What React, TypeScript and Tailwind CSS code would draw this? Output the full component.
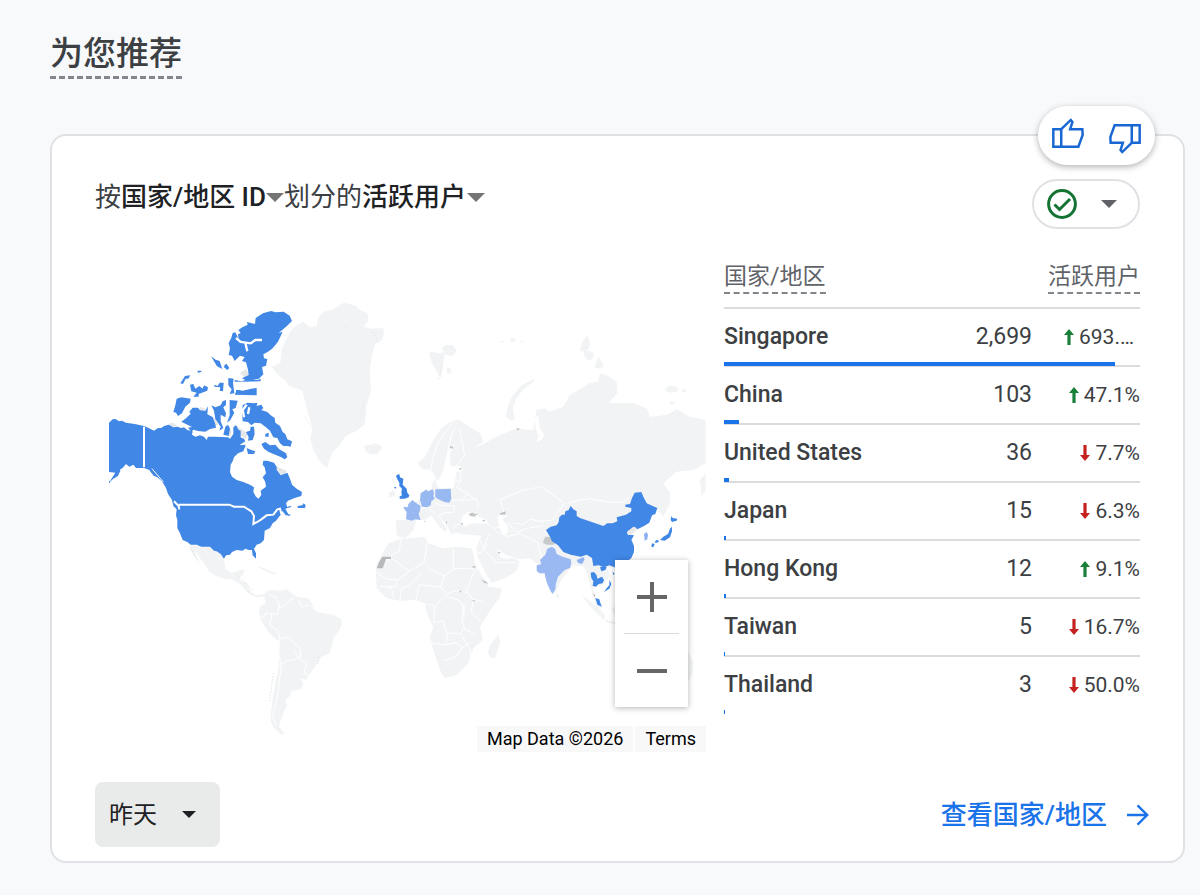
import { useState } from 'react';

type Row = { country: string; users: number; change: string; up: boolean };

const ROWS: Row[] = [
  { country: 'Singapore', users: 2699, change: '693.…', up: true },
  { country: 'China', users: 103, change: '47.1%', up: true },
  { country: 'United States', users: 36, change: '7.7%', up: false },
  { country: 'Japan', users: 15, change: '6.3%', up: false },
  { country: 'Hong Kong', users: 12, change: '9.1%', up: true },
  { country: 'Taiwan', users: 5, change: '16.7%', up: false },
  { country: 'Thailand', users: 3, change: '50.0%', up: false },
];

const TOTAL = ROWS.reduce((sum, r) => sum + r.users, 0);

function Caret({ className }: { className: string }) {
  return (
    <svg viewBox="0 0 16 8" className={className} aria-hidden="true">
      <path d="M0 0h16L8 8z" fill="currentColor" />
    </svg>
  );
}

function Thumb({ className = '' }: { className?: string }) {
  return (
    <svg viewBox="0 0 97 91" className={`h-[30px] w-8 ${className}`} fill="none" stroke="#1967d2" strokeWidth="7.5" aria-hidden="true">
      <path d="M4 34h24v53H4z" />
      <path d="M28 34 57 6l5 6-7 22h37l1 17-13 36H28" />
    </svg>
  );
}

function Trend({ up }: { up: boolean }) {
  return up ? (
    <svg viewBox="0 0 10 16" className="h-4 w-[10px]" fill="#188038" role="img" aria-label="up">
      <path d="M5 0l5 6H6.6v10H3.4V6H0z" />
    </svg>
  ) : (
    <svg viewBox="0 0 10 16" className="h-4 w-[10px]" fill="#c5221f" role="img" aria-label="down">
      <path d="M5 16l5-6H6.6V0H3.4v10H0z" />
    </svg>
  );
}

function WorldMap() {
  return (
    <svg viewBox="109 296 597 456" className="block w-full" role="img" aria-label="World map">
      {/* Greenland, Iceland, Svalbard */}
      <g transform="translate(240 290) scale(.33333)" fill="#f1f3f4">
        <path d="M95 230l26-12 4-40 25-53 18-18 22-12 20 17 20-4 4-24 20-20 22-4 34-22 35 8 14 14 24 10 2 22-14 18 20 6 38-2 4 16-8 20-20 12-8 30-8 48 4 60-14 50-4 52-22 18-38 20-18 28-20 18-8 22-8 26-18-14-22-38-10-36 6-28-16-62-14-54-40-14-12-18-24-18z" />
        <path d="M372 470l14-6 8 4 20-6 12 10-10 14-20 6-18-8z" />
        <path d="M567 190l12-6 12 6 24-4-4 26-8 52-14-22-14-24zM605 175l12-10 20 0 14 16-12 16-20-2zM620 232l10 2 4 14-12 4z" />
        <path d="M362 380l10-50M195 380l18 34M315 110l12 4M400 126l14 32M596 268l10-40" stroke="#d9dbdd" strokeWidth="2" strokeDasharray="4 6" fill="none" />
      </g>

      {/* Mexico, South America */}
      <g transform="translate(100 480) scale(.33333)">
        <g fill="#f1f3f4">
          <path d="M268 196L330 200 345 214 356 214 372 236 376 268 394 278 412 274 426 268 434 272 426 288 418 292 422 304 440 308 448 326 456 340 474 346 490 342 490 350 470 352 448 342 436 330 420 312 396 298 376 296 348 288 328 276 318 258 298 232 286 214 290 236 302 250 292 244 276 218z" />
          <path d="M490 345l12-12 13-3 26 2 19-4 18 14 12 8 35 5 10 14 6 20 22 10 37 5 24 14 2 14-8 18-18 26-4 22-7 22-27 12-10 18-20 28-14 22-16-6 8 20-6 12-30 8-4 14-12 8-2 14 6 4-10 20-6 18-8 20 0 10 16 18-10 4-20-18-12-22 0-20 6-44 8-50 10-46 0-40 2-38-30-26-26-40-6-22 6-20 16-10z" />
          <path d="M468 258l22 6 30 12 14 6-18 0-30-14z" />
        </g>
        <g fill="none" stroke="#fff" strokeWidth="3">
          <path d="M510 345l20 8 8 20-6 32-16-6-22 4M532 385l20-6 12-14 18-12M596 360l8 20 22-4M516 400l-6 36 24 16 6 24 24-4 36 32 2 26-18 10-20 2-24 12M538 476l-2 42 8 40-12 90-14 60 12 30M582 514l14 20 24 18-8 24 18 12M476 410l14 2 10-16" />
        </g>
        <path d="M272 206l22 34M410 285l50 46M656 532l-2 20M520 580l-12 88" stroke="#cfd1d3" strokeWidth="2" strokeDasharray="4 5" fill="none" />
      </g>

      {/* Canada and the United States */}
      <g transform="translate(100 290) scale(.33333)">
        <path d="M205 402l14-4 14 10-20 4zM420 250l18-14 8 14-8 16zM300 350l22 10-4 12-20-10zM340 384l10-4 4 24-8 4zM385 405l10 20-6 16-8-20zM402 402l40 28-4 16-20-10zM525 528l36 14-10 14-16-4z" fill="#e4e6e8" />
        <g fill="#4187e6">
          <path d="M27 398L38 388 46 387 58 394 66 392 78 398 104 402 132 408 146 414 162 422 174 414 184 414 192 408 206 404 220 412 232 410 244 414 252 412 262 420 278 424 276 434 286 440 300 436 312 440 320 450 324 440 340 440 384 442 390 446 400 432 408 426 416 440 432 446 436 454 420 464 424 470 436 468 430 484 414 490 402 502 398 514 392 524 390 546 396 560 410 570 430 576 450 584 462 592 460 606 468 620 476 626 484 614 482 602 498 590 496 576 488 562 498 550 494 532 488 524 490 512 502 512 522 518 530 530 530 540 542 556 562 548 570 566 576 584 590 596 606 606 604 618 584 624 564 632 558 640 562 652 568 648 576 650 556 656 566 674 558 676 546 662 542 674 528 692 518 700 510 714 494 722 492 750 482 760 470 764 462 776 468 790 468 806 458 796 456 780 446 780 436 776 428 782 410 780 396 786 390 794 378 796 372 806 362 792 350 784 342 782 330 770 304 770 290 764 272 764 262 756 248 750 240 730 232 714 232 690 228 676 230 658 220 648 216 630 204 612 198 594 186 574 172 562 158 556 148 540 132 534 108 534 100 524 88 530 78 522 70 532 62 540 54 558 40 566 27 578 46 548 27 546z" />
          <path d="M415 120l12-8 16-8-2-8 24 6 2-18 22-14 24-7 14 4 24-2 18 12 7 16-16 16-24 20 12-4-14 30-16 20-14 10-14 8 2 12 10 2-4 20-12 4 4 22-14 14-16 2-18 4-16-8 20-10-2-16-6-22-12-4 8-12-14-4-16 16-8-16-10-2 4-20-4-16 8-16 4-14 8-2 10 20-2-14 8-4z" />
          <path d="M408 300l8 0 12 2 26-6 16-2 0 22-66-2 4-8zM404 270l20 4 20-6 30 2 8-4 0 8-78 1z" />
          <path d="M428 346l14-8 22 2 8-2-2 10 14-4 6 10-6 6 18 6 10 10 12 8 2 14 14 10 8 18 8 6 6 16 14 6-4 16-10-2-12 0-10-8-8-16-12-2-10-20-14-12-14-10-18-2-10 8-10-10-16-2-2-24z" />
          <path d="M244 395l14-10 14-14-4-6 10-12 16 0 6 8 16 2 8-14-2 24 16 8 8 22 2 10-18 4-14 8-22-2-14-4-6 6-10-12 12-2z" />
          <path d="M230 326l14-4 28 4-2 12-14 12-10 20-12 8-6-10-8-2 6-20z" />
          <path d="M270 284l10-2 6 14 12-8 10 8 4-10 12 6-2 10-26 10 0 8-16 0 10-12-16-4zM241 280l14-22 16-2-6 10-8 0-8 16zM333 199l14 10 12 4 8 24-16-8zM374 224l6-2 8 12-6 6-10-8zM343 284l10 4 6-10 12 0-2 26-10-2 2-10-18-2zM385 264l16 2-2 12 4 32-14 2 6-14-10-12zM292 242l12 0 0 4-10 2z" />
          <path d="M334 346l12 6 16-6 6-12 10-4 0 14-8 8 8 18-2 12-14-8 0 20 8 20-12 8 4-12-16-24-4-24zM389 330l24 2-6 22-10 4 6 10-12 22-10 8 8-22z" />
          <path d="M370 434l6-24 8-6 6 12-4 22zM400 440l0-28 8-6 8 14 6 2 0 24zM438 426l12-4 2-12 10 0 2 22-6 18-14 2 2-10zM484 462l12-6 14 10 16-2 12 14 20 12 4 12-8 6-10-6-18-8-20-8-14-10zM440 474l14 6 12 4-4 8-18 0zM496 432l10-4 0 12-10 0zM593 648l14-2 4-6 6 6-2 8-22 0z" />
          <path d="M27 572l4 4-4 4zM418 466l18-2 0 8-14 2zM552 660l12 12 8 2-4 4-12-4z" />
        </g>
        <path d="M132 410v122M236 644h152l14 6 30 0 22 14 8 14-2 24 12-6 12-8 16-12 20-2 12-16 8-2 4 16M222 634l14 14 2 10" fill="none" stroke="#fff" strokeWidth="6" />
        <path d="M408 144l14 12 30 4 14-10 20 0M436 158l6 26M440 344l-12 16 4 22M448 352l-4 20" fill="none" stroke="#fff" strokeWidth="7" />
        <path d="M144 542l14 12M156 536l34 40M60 540l16-8" fill="none" stroke="#fff" strokeWidth="3" />
      </g>

      {/* Europe, Africa and Asia */}
      <g transform="translate(360 400) scale(.33333)">
        <g fill="#f1f3f4">
          <path d="M172 190l23-20 20-40 25-40 25-22 30-10 25 17 40 25 10 25-30 20 35-15 25-15 20-10 50-20 40 5 10 0 10-60 25-5 15 10 40-15 20-35 60-35 25-5 5-25 20 5 30 20 2 35-27 30 75 0 40 15 10 25 50-5 30-17 40 22 47 10v130l-37 20-50 5-40 35 20 30-5 40-15 30-20-25-25 45-35 20-30 10 20 20 2 30-12 30-45 25-25-5 10 30-30 30-20-20 0 40 24 50-14-10-16-50-10-40-10-30-35-5-35 45-18 40-17-30-15-50-25-10-20-15-30 3-40-13-30-20 12 26 20 6 20-4 18 12-10 28-30 20-45 15-15-25-25-50-5-30 15-36-55-4-20-5-15 5-15-30-20-22 6 14 16 22-4 10-18-16-24-34-20 12-26 0-9 32-25 25-25-10-3-45 43 0-5-40 20-15 30-15 20-20 0-20 10-14 10 26 45 3 5-25 5-25 20-5-10-15-28 4-2-38 18-36-26 30-14 60-15 28-15-28-12-8-18 0z" />
          <path d="M85 430l35-12 75-8 10 20 45 15 40-5 45 5 10 35 25 50 15 30 40 5-5 25-35 50-25 40 8 40-28 25-15 45-35 35-35 10-15-25-20-60-10-40 10-30-20-40-5-30-30-10-45 2-40-7-30-30-2-45 2-30 20-34z" />
          <path d="M415 705l6 20-16 50-17-4-4-16 6-20zM1020 240l17-20v50l-12 20zM85 280l14-10 8 6-4 12-14 4zM20 140l26-10 20 12-14 20-24 0z" />
          <path d="M924 265l6 40-4 20-4-36z" />
        </g>
        <g fill="#fff">
          <path d="M300 372l8-24 18-14 12 10 18-8-6 10 34 18-4 8-42-2-22 8zM412 350l18-12 12 8-14 12 14 20 2 20-14 8-12-22z" />
          <path d="M525 55l10-10 4 40 14 20-8 14-14 8 4-20-8-20zM340 445l10 30 24 46 20 34-14-10-16-20-20-36z" />
        </g>
        <g fill="none" stroke="#fff" strokeWidth="3">
          <path d="M210 228l8-50 12-40 30-48 20-20M262 160l14-60 12-20M290 195l24-28-14-80M302 212l0 30-12 20 34 20 30 22 0 20M275 240l26 4M275 300l40 0 38-2M225 310l20 6 40 2-6 20-26 0-20 12M282 380l16-10M180 322l24 0 20 20M320 285l-18 18M375 365l28 20 16-4M388 400l-8 18-10 30 40 40 60 0M410 395l34 14 34-8 56 26 10 50M432 335l-12-35 64-28 60-12 40 28 30 22-38 50-36 4-30-6-22 16-30-6M622 310l30-8 40-6 50 10 50 0 14-14M436 395l6-24 30 26 30-12 46-8M356 412l14 34M340 450l20 10 24-30" />
          <path d="M122 420l-4 32-42 26M92 472l56 42-36 26-32-2-30-20M148 514l44-26 10-60M192 488l20 20 40 20 28-20 0-62M280 506l62 0M252 528l-10 34 20 20 24-10 38 6 14 20 36 8M318 578l20-54 14-20M168 600l10-46 36 4 28 4M148 552l20-14 16-20M120 600l4-34 26-10M100 590l-6-30-36 0M80 566l30-8 0-18M196 612l28 6 32-30 40 12 14 18-4 40 8 30 30 14M224 620l-4 48 28-6 12 36 40 4 14-20M262 700l-4 34-48-4M258 734l30-6 20 14-20 28-40 14M308 742l20-14M312 610l0 46M340 602l-6 34 30 30M302 700l14 28 16 22 0 24M68 480l24 0" />
        </g>
        <g fill="#c3c5c6">
          <path d="M67 470h26v7H78l-10 28H50l8-20z" fill="#b7b8b9" />
          <path d="M325 342l12-4 8 4 10-2-12 10-12-2zM270 138l10 2-2 6-8-2zM366 360l10 0-4 6zM420 340l18-6-2 10-16 0zM298 204l6 0 0 5-6 0zM338 498l8 0 0 5-8 0zM364 538l16 8 4 6-12-4zM414 455l8 2-2 4-6-2zM298 572l6 0 0 5-6 0zM338 600l6 0 0 4-6 0zM302 368l8 2-4 6zM258 362l4 6-4 4zM470 84l10 2-8 6zM192 362l6 2-4 3z" />
        </g>
        <g fill="#3c84e4">
          <path d="M118 222l2 10 10 4-2 18 12 12 2 12 6 8-2 6-12 4-14 0-2-6 8-4-2-8 2-12-8-8 0-10-6-10-4-10 4-4zM103 260l6 2-2 4-4-2z" />
        </g>
        <g fill="#98b8f2">
          <path d="M131 320l12 2 2-10 12-12 10 8 15 10-2 14-4 10 6 18-16-2-10 4-18-4 2-22-8-10z" />
          <path d="M182 280l12-8 4-4 6 6 14-6 4 10-2 10 4 8-10 8-2 12-10 6-16-2-6-20zM226 268l16 0 30-2 2 30-6 12-14-2-14-6-14-8z" />
        </g>
      </g>

      {/* Arctic islands north of Russia */}
      <g transform="translate(500 320) scale(.33333)" fill="#f1f3f4">
        <path d="M18 290l6-34 12-26 28-34 40-20-2 8-30 22-24 30-10 30 6 30-12 6zM240 92l6-26 16-18 8 20-4 20-12 8zM250 96l18-4 14 8-4 16-16 6-8-14zM282 142l14-32 16 28-12 8zM496 204l16-8 20 6 2 12-22 4-14-4zM545 206l12 4 4 8-12-2zM0 66l8-4 2 8zM30 58l14-4 4 10-14 4zM60 66l8-4 2 6zM510 244l14 2-4 8-10-2z" />
      </g>

      {/* China, India, Japan and the south-east */}
      <g transform="translate(530 480) scale(.33333)">
        <path d="M155 345l20 14 24 20 26 26-2 14-24-20-26-30zM225 420l40 8-2 6-36-8zM245 385l30-14v30l-24 4zM462 515l14 4 12 26 0 32-10 24-16 4zM78 340l8 4 2 10-8-2z" fill="#f1f3f4" />
        <path d="M40 182l6-12 12 0 8 6 12 6-6 12-20 0-12-4z" fill="#c8c9ca" />
        <path d="M188 338l8 8-2 6z" fill="#b5b6a8" />
        <path
          d="M48 150L62 140 80 136 86 126 88 112 96 104 104 104 106 94 116 90 122 78 130 88 140 94 140 108 150 114 174 122 196 130 220 138 232 130 248 130 262 124 260 112 288 104 304 94 304 84 286 80 286 74 300 72 306 54 314 38 334 36 340 50 350 70 368 78 382 84 376 102 366 106 358 128 342 138 322 148 310 140 296 152 290 160 300 164 312 166 304 180 312 198 312 216 304 234 290 246 256 250 254 262 238 256 222 262 206 256 190 258 186 234 170 224 152 230 122 224 100 216 84 196 66 184 60 170z"
          fill="#4187e6"
        />
        <path d="M292 154l22-14 8 8-14 14-14 4z" fill="#ece9e9" />
        <path d="M210 262l12-4 8 4-4 8-12 4zM248 276l6 4-4 6zM182 278l10-2 8 10 2 10 14-6 6 10-4 10-12 2-8 8-10-2 2-14-6-10zM238 300l6 12-6 14-16 10 10-14 6-6zM196 354l12 4 4 14 4 8-14-6zM424 108l4 6 14 2-2 6-14 4-4-6zM426 140l0 14-6 18-16 10-14-2 10-10 14-8 6-16zM378 180l10 2-6 6-8 0zM366 190l8 2-4 10-6-2z" fill="#4187e6" />
        <path d="M342 162l8-6 4 8-2 14-8 4zM140 240l20-8 4 6-8 14-12-4z" fill="#8db1f0" />
        <path d="M20 256l14-4-4-12 16-16 6-18 14-6 10 8 4 14 18 8 24 8 2 12-4 14-16 6-20 20-6 20-2 18-8 14-6-8-10-22-6-20-2-12-16 0-8-8z" fill="#9ab9f3" />
      </g>
    </svg>
  );
}

export default function App() {
  const [period, setPeriod] = useState('昨天');

  return (
    <main className="min-h-screen bg-[#f8f9fb] pt-8 pr-[15px] pb-8 pl-[50px] font-[Roboto,'Noto_Sans_CJK_SC',sans-serif] text-[#3c4043]">
      <h1 className="w-fit border-b-3 border-dashed border-[#80868b] text-[33px] leading-[44px] font-medium">为您推荐</h1>

      <section className="relative mt-[55px] rounded-2xl border-2 border-[#dfe1e4] bg-white pt-[43px] pb-[14px]">
        <div className="absolute -top-[30px] right-7 flex h-[59px] w-[117px] items-center justify-between rounded-full bg-white px-[14px] shadow-[0_2px_6px_rgba(60,64,67,0.4)]">
          <button type="button" aria-label="Thumbs up" className="pb-1.5"><Thumb /></button>
          <button type="button" aria-label="Thumbs down" className="pt-1.5"><Thumb className="rotate-180" /></button>
        </div>

        <header className="flex items-start justify-between px-[43px]">
          <h2 className="flex items-center text-[26px] leading-9">
            <span>按</span>
            <label className="flex items-center font-medium text-[#202124]">
              <select aria-label="Dimension" className="appearance-none">
                <option>国家/地区 ID</option>
              </select>
              <Caret className="h-[9px] w-[18px] text-[#757575]" />
            </label>
            <span>划分的</span>
            <label className="flex items-center font-medium text-[#202124]">
              <select aria-label="Metric" className="appearance-none">
                <option>活跃用户</option>
              </select>
              <Caret className="h-[9px] w-[18px] text-[#757575]" />
            </label>
          </h2>
          <button type="button" aria-label="Data quality" className="flex h-[50px] w-[108px] items-center justify-between rounded-full border-2 border-[#dfe1e4] pr-[21px] pl-[13px]">
            <svg viewBox="0 0 30 30" className="size-[30px]" fill="none" stroke="#137333" strokeWidth="3" aria-hidden="true">
              <circle cx="15" cy="15" r="13.4" />
              <path d="M7.5 15.5l5 5L23 10" />
            </svg>
            <Caret className="h-2 w-4 text-[#5f6368]" />
          </button>
        </header>

        <div className="mt-[33px] grid grid-cols-[597fr_416fr] items-start gap-[18px] pr-[43px] pl-[57px]">
          <div className="relative mt-[34px]">
            <WorldMap />
            <div className="absolute right-[18px] bottom-[45px] flex w-[73px] flex-col items-center bg-white text-[#666] shadow-[0_1px_6px_rgba(0,0,0,0.3)]">
              <button type="button" aria-label="Zoom in" className="flex h-[73px] w-full items-center justify-center">
                <svg viewBox="0 0 30 30" className="size-[30px]" aria-hidden="true">
                  <path d="M13 0h4v13h13v4H17v13h-4V17H0v-4h13z" fill="currentColor" />
                </svg>
              </button>
              <div className="h-px w-[55px] bg-[#dcdcdc]" />
              <button type="button" aria-label="Zoom out" className="flex h-[73px] w-full items-center justify-center">
                <svg viewBox="0 0 30 30" className="size-[30px]" aria-hidden="true">
                  <path d="M0 13h30v4H0z" fill="currentColor" />
                </svg>
              </button>
            </div>
            <div className="absolute right-0 bottom-0 flex gap-[2px] text-lg leading-[26px] text-black">
              <span className="bg-[#f8f8f8] px-[10px]">Map Data ©2026</span>
              <a href="#terms" className="bg-[#f8f8f8] px-[10px]">Terms</a>
            </div>
          </div>

          <table className="w-full table-fixed border-collapse">
            <thead>
              <tr className="h-[46px] border-b-2 border-[#dadce0] text-[23px] leading-[30px] text-[#5f6368]">
                <th scope="col" className="w-1/2 p-0 text-left align-top font-normal">
                  <span className="inline-block border-b-2 border-dashed border-[#80868b]">国家/地区</span>
                </th>
                <th scope="col" colSpan={2} className="p-0 text-right align-top font-normal">
                  <span className="inline-block border-b-2 border-dashed border-[#80868b]">活跃用户</span>
                </th>
              </tr>
            </thead>
            <tbody>
              {ROWS.map((r) => (
                <tr key={r.country} className="relative h-[58px] border-b-2 border-[#dadce0] text-[23px] leading-7 last:border-transparent">
                  <th scope="row" className="p-0 text-left font-medium">
                    {r.country}
                    <div className="absolute -bottom-[2px] left-0 h-1 min-w-px bg-[#1a73e8]" style={{ width: `${(r.users / TOTAL) * 100}%` }} />
                  </th>
                  <td className="py-0 pr-1 pl-0 text-right">{r.users.toLocaleString('en-US')}</td>
                  <td className="p-0 text-[21px]">
                    <div className={`flex items-center justify-end gap-[5px] ${r.change.endsWith('…') ? 'pr-[6px]' : ''}`}>
                      <Trend up={r.up} />
                      <span>{r.change}</span>
                    </div>
                  </td>
                </tr>
              ))}
            </tbody>
          </table>
        </div>

        <footer className="mt-[30px] flex items-center justify-between pr-[34px] pl-[43px]">
          <label className="relative flex items-center text-[#202124]">
            <select
              aria-label="Date range"
              value={period}
              onChange={(e) => setPeriod(e.target.value)}
              className="h-[65px] w-[125px] appearance-none rounded-lg bg-[#e9ebea] pl-[14px] text-2xl"
            >
              <option>昨天</option>
            </select>
            <Caret className="pointer-events-none absolute right-6 h-[7px] w-[14px]" />
          </label>
          <a href="#countries" className="flex items-center gap-5 text-[26px] leading-9 font-medium text-[#1a73e8]">
            查看国家/地区
            <svg viewBox="0 0 22 22" className="size-[22px]" fill="none" stroke="currentColor" strokeWidth="2.4" aria-hidden="true">
              <path d="M0 11h20M10.5 1.3L20.2 11l-9.7 9.7" />
            </svg>
          </a>
        </footer>
      </section>
    </main>
  );
}
